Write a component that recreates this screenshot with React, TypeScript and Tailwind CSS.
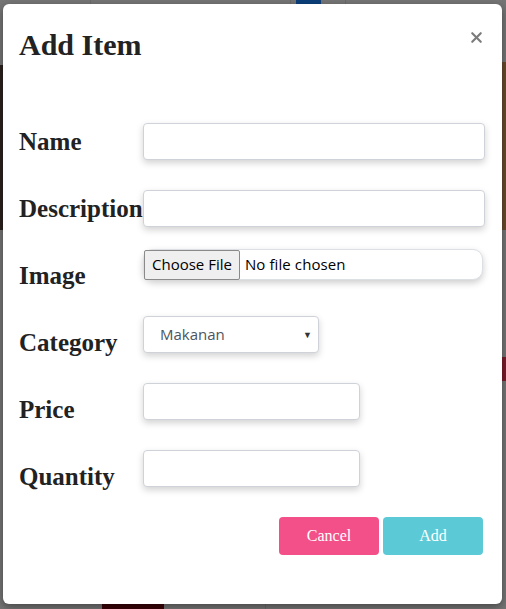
import { X } from 'lucide-react';

const labelCls =
  "w-[124px] shrink-0 mt-[14px] text-[25px] leading-[26px] font-bold text-[#222] font-['Liberation_Serif',serif]";
const inputCls =
  'h-[37px] rounded-[4px] border border-[#cfd3d9] bg-white shadow-[0_3px_7px_rgba(0,0,0,0.18)]';

function Backdrop() {
  return (
    <>
      <div className="absolute left-[90px] top-0 h-[4px] w-px bg-[#6a6a6a]" />
      <div className="absolute left-[290px] top-0 h-[4px] w-px bg-[#6a6a6a]" />
      <div className="absolute left-[345px] top-0 h-[4px] w-px bg-[#6a6a6a]" />
      <div className="absolute left-[296px] top-0 h-[4px] w-[25px] bg-[#0b3f7a]" />
      <div className="absolute left-0 top-[65px] h-[165px] w-[4px] bg-[#2a211d]" />
      <div className="absolute right-0 top-[62px] h-[168px] w-[4px] bg-[#6a4a2c]" />
      <div className="absolute right-0 top-[357px] h-[24px] w-[4px] bg-[#7a1d2b]" />
      <div className="absolute left-[102px] bottom-0 h-[5px] w-[62px] bg-[#3a0206]" />
      <div className="absolute left-[265px] bottom-0 h-[5px] w-px bg-[#6a6a6a]" />
    </>
  );
}

export default function App() {
  return (
    <div className="relative w-[506px] h-[609px] bg-[#757575] overflow-hidden">
      <Backdrop />
      <div className="relative ml-[3px] mt-[4px] w-[499px] h-[600px] rounded-[6px] bg-white shadow-[0_3px_9px_rgba(0,0,0,0.4)] pl-4 pr-[17px] pt-6">
        <div className="flex items-start justify-between">
          <h2 className="text-[30px] leading-[33px] font-bold text-[#222] font-['Liberation_Serif',serif]">
            Add Item
          </h2>
          <button className="mt-[1px] text-[#7c7c7c]">
            <X size={17} strokeWidth={3} />
          </button>
        </div>

        <div className="mt-[54px] flex flex-col">
          <div className="flex h-[67px] items-start">
            <label className={labelCls}>Name</label>
            <input className={`${inputCls} mt-2 w-[342px]`} />
          </div>
          <div className="flex h-[67px] items-start">
            <label className={labelCls}>Description</label>
            <input className={`${inputCls} mt-2 w-[342px]`} />
          </div>
          <div className="flex h-[67px] items-start">
            <label className={labelCls}>Image</label>
            <div className="flex h-[31px] w-[340px] items-center rounded-[10px] border border-[#dcdfe3] bg-white shadow-[0_3px_7px_rgba(0,0,0,0.2)] font-['Open_Sans',sans-serif] text-[15px] text-black">
              <span className="flex h-[30px] items-center rounded-[2px] border border-[#8a8a8a] bg-[#efefef] px-[7px]">
                Choose File
              </span>
              <span className="ml-[5px] tracking-[0.1px]">No file chosen</span>
            </div>
          </div>
          <div className="flex h-[67px] items-start">
            <label className={labelCls}>Category</label>
            <div className={`${inputCls} relative flex w-[176px] items-center pl-[16px] font-['Open_Sans',sans-serif] text-[15px] text-[#4d5560]`}>
              Makanan
              <span className="absolute right-[6px] top-[11px] text-[9px] text-[#333]">▼</span>
            </div>
          </div>
          <div className="flex h-[67px] items-start">
            <label className={labelCls}>Price</label>
            <input className={`${inputCls} w-[217px]`} />
          </div>
          <div className="flex h-[67px] items-start">
            <label className={labelCls}>Quantity</label>
            <input className={`${inputCls} w-[217px]`} />
          </div>
        </div>

        <div className="flex justify-end gap-1 pr-[2px]">
          <button className="h-[38px] w-[100px] rounded-[4px] bg-[#f3508a] text-[16px] text-white font-['Liberation_Serif',serif]">
            Cancel
          </button>
          <button className="h-[38px] w-[100px] rounded-[4px] bg-[#5bcad6] text-[16px] text-white font-['Liberation_Serif',serif]">
            Add
          </button>
        </div>
      </div>
    </div>
  );
}
